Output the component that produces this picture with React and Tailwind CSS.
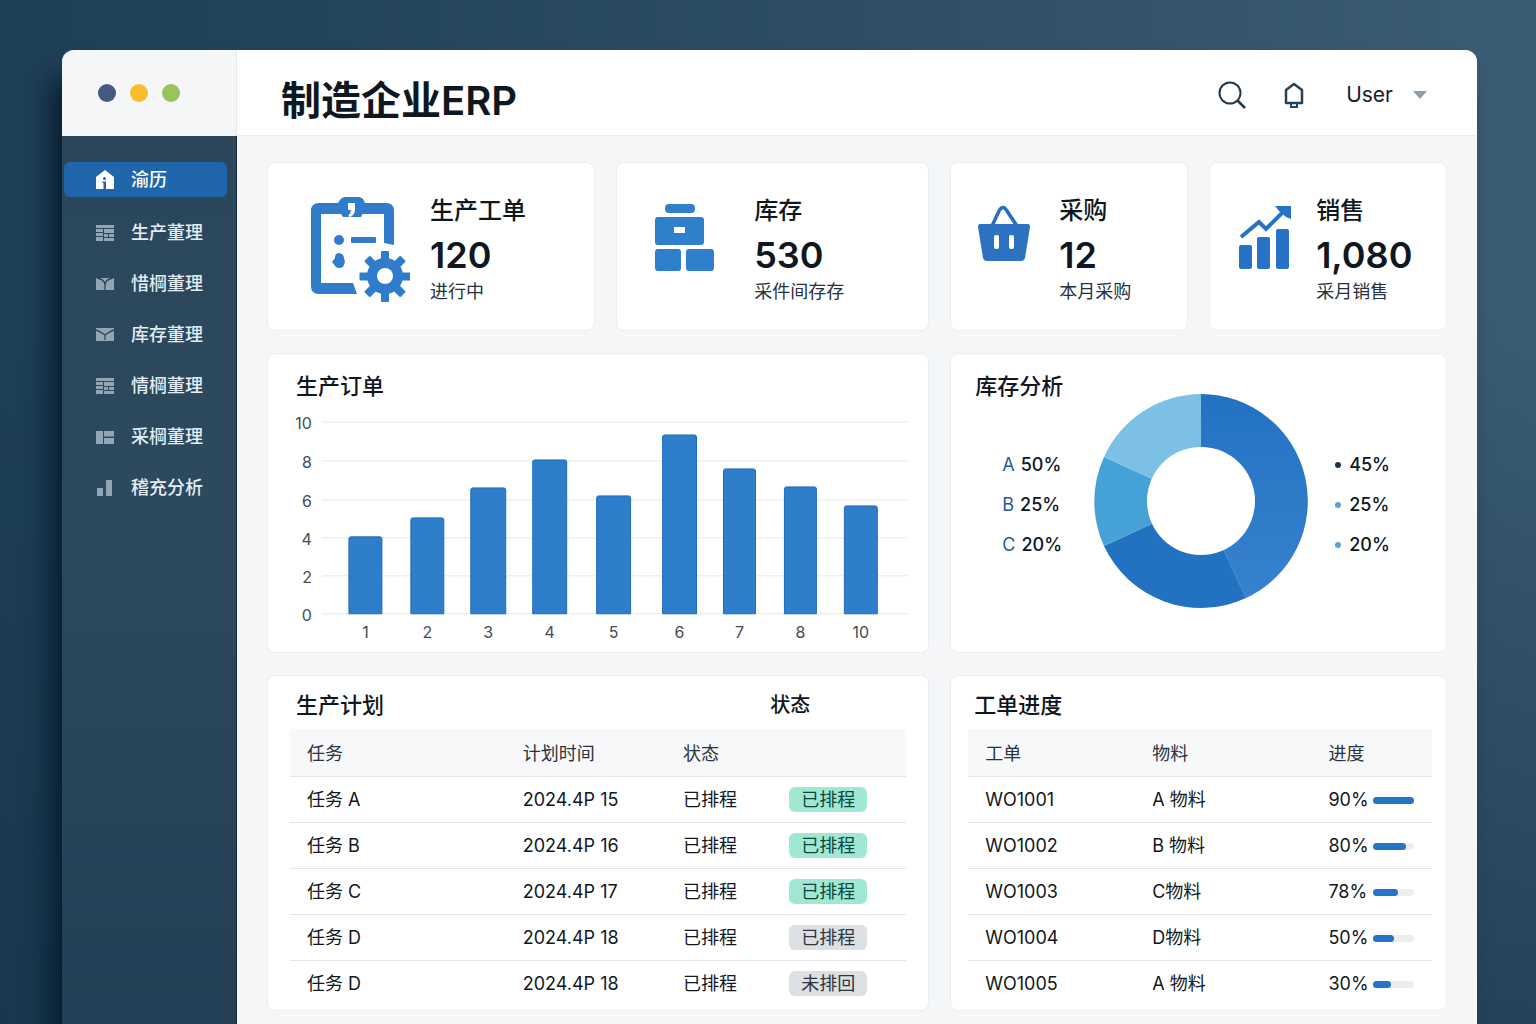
import clsx from 'clsx'

const navItems = [
  { id: 'home', label: '渝历', icon: 'home', active: true },
  { id: 'production', label: '生产董理', icon: 'rows' },
  { id: 'material', label: '惜棡董理', icon: 'fork' },
  { id: 'stock', label: '库存董理', icon: 'mail' },
  { id: 'sales', label: '情棡董理', icon: 'rows' },
  { id: 'purchase', label: '采棡董理', icon: 'panes' },
  { id: 'analysis', label: '稽充分析', icon: 'bars' },
]

const bars = [
  { label: '1', x: 81, w: 33, top: 127 },
  { label: '2', x: 143, w: 33, top: 108 },
  { label: '3', x: 203, w: 35, top: 78 },
  { label: '4', x: 265, w: 34, top: 50 },
  { label: '5', x: 329, w: 34, top: 86 },
  { label: '6', x: 395, w: 34, top: 25 },
  { label: '7', x: 456, w: 32, top: 59 },
  { label: '8', x: 517, w: 32, top: 77 },
  { label: '10', x: 577, w: 33, top: 96 },
]

const gridLines = [
  { label: '10', y: 12 },
  { label: '8', y: 51 },
  { label: '6', y: 90 },
  { label: '4', y: 128 },
  { label: '2', y: 166 },
  { label: '0', y: 204 },
]

const plans = [
  { id: 1, task: '任务 A', date: '2024.4P 15', status: '已排程', badge: '已排程', done: true },
  { id: 2, task: '任务 B', date: '2024.4P 16', status: '已排程', badge: '已排程', done: true },
  { id: 3, task: '任务 C', date: '2024.4P 17', status: '已排程', badge: '已排程', done: true },
  { id: 4, task: '任务 D', date: '2024.4P 18', status: '已排程', badge: '已排程', done: false },
  { id: 5, task: '任务 D', date: '2024.4P 18', status: '已排程', badge: '未排回', done: false },
]

const orders = [
  { id: 'WO1001', material: 'A 物料', percent: '90%', fill: 100 },
  { id: 'WO1002', material: 'B 物料', percent: '80%', fill: 80 },
  { id: 'WO1003', material: 'C物料', percent: '78%', fill: 60 },
  { id: 'WO1004', material: 'D物料', percent: '50%', fill: 50 },
  { id: 'WO1005', material: 'A 物料', percent: '30%', fill: 44 },
]

function NavIcon({ name }) {
  if (name === 'home') {
    return (
      <svg viewBox="0 0 20 20" className="size-5 shrink-0" aria-hidden="true">
        <path d="M10 0 19 7V19H1V7z" fill="#fff" />
        <circle cx="9.500" cy="8.500" r="1.500" fill="#1f66ab" />
        <path d="M7.500 11.500H11V19H8.500V13H7.500z" fill="#1f66ab" />
      </svg>
    )
  }
  return (
    <svg viewBox="0 0 20 20" className="size-5 shrink-0" fill="#93a4b4" aria-hidden="true">
      {name === 'rows' && (
        <path d="M1 2h18v3H1zM1 6h7v3H1zM9 6h10v4H9zM1 10h7v3H1zM9 11h4v3H9zM14 11h5v3h-5zM1 14h7v4H1zM9 15h10v3H9z" />
      )}
      {name === 'fork' && (
        <>
          <path d="M1 4h18v12H1z" />
          <path d="M2 4c5 1 8 3 8 7M18 4c-5 1-8 3-8 7v5" fill="none" stroke="#2b465b" strokeWidth="1.300" />
        </>
      )}
      {name === 'mail' && (
        <>
          <path d="M1 3h18v13H1z" />
          <path d="M1 5c4 1 7 4 9 5 2-1 5-4 9-5M10 10v5" fill="none" stroke="#2b465b" strokeWidth="1.300" />
        </>
      )}
      {name === 'panes' && <path d="M1 4h7v13H1zM9 4h10v5.500H9zM9 11h10v6H9z" />}
      {name === 'bars' && <path d="M2 10h6v8H2zM11 2h6v16h-6z" />}
    </svg>
  )
}

function ClipboardIcon() {
  return (
    <svg viewBox="0 0 100 106" className="h-[106px] w-[100px] shrink-0" fill="#2f7cca" aria-hidden="true">
      <path d="M84 48 74 46V17H11V86H43L47 97H9Q1 97 1 89V14Q1 6 9 6H28Q31 0 35 0H49Q53 0 55 6H76Q84 6 84 14z" />
      <path d="M28 12H55L51 20H33z" />
      <path d="M38 6H45V12Q45 18 40 20L38 19Q41 16 41 13H38z" fill="#fff" />
      <circle cx="29" cy="43" r="5" />
      <rect x="41" y="40" width="25" height="6" rx="1" />
      <path d="M29 56q5 1 5 5l1 4-2 5q-4 2-7 0l-4-5 3-4q0-5 4-5z" />
      <circle cx="75" cy="79" r="18" />
      <rect x="71" y="54" width="8" height="51" rx="1" />
      <rect x="71" y="54" width="8" height="51" rx="1" transform="rotate(45 75 79.500)" />
      <rect x="71" y="54" width="8" height="51" rx="1" transform="rotate(90 75 79.500)" />
      <rect x="71" y="54" width="8" height="51" rx="1" transform="rotate(135 75 79.500)" />
      <circle cx="75" cy="79" r="8" fill="#fff" />
    </svg>
  )
}

function BoxesIcon() {
  return (
    <svg viewBox="0 0 60 68" className="h-[68px] w-[60px] shrink-0" fill="#2f7fcd" aria-hidden="true">
      <rect x="10" y="0" width="30" height="9" rx="4" />
      <rect x="0" y="13" width="49" height="28" rx="3" />
      <rect x="19" y="23" width="11" height="6" fill="#fff" />
      <rect x="0" y="45" width="26" height="22" rx="3" />
      <rect x="31" y="45" width="28" height="22" rx="3" />
    </svg>
  )
}

function BasketIcon() {
  return (
    <svg viewBox="0 0 54 58" className="h-[58px] w-[54px] shrink-0" aria-hidden="true">
      <path d="M15 22 22 7Q26 0 30 7L40 22" fill="none" stroke="#2a6dbc" strokeWidth="3.500" />
      <path d="M3 20H51Q53 20 53 23L48 54Q47 57 45 57H9Q7 57 6 54L1 23Q1 20 3 20z" fill="#2c72c1" />
      <rect x="17" y="31" width="5" height="14" rx="2" fill="#fff" />
      <rect x="32" y="31" width="5" height="14" rx="2" fill="#fff" />
    </svg>
  )
}

function GrowthIcon() {
  return (
    <svg viewBox="0 0 54 66" className="h-[66px] w-[54px] shrink-0" fill="#2673c6" aria-hidden="true">
      <rect x="1" y="40" width="13" height="24" rx="2" />
      <rect x="19" y="32" width="13" height="32" rx="2" />
      <rect x="38" y="24" width="13" height="40" rx="2" />
      <path d="M3 32 21 17 28 24 45 7" fill="none" stroke="#2673c6" strokeWidth="4" />
      <path d="M37 1H53V14L48 12 41 6z" />
    </svg>
  )
}

function Card({ className, children }) {
  return (
    <section className={clsx('rounded-lg border border-[#ebeef1] bg-white', className)}>{children}</section>
  )
}

function StatCard({ icon, title, value, note, className }) {
  return (
    <Card className={clsx('flex h-[169px]', className)}>
      {icon}
      <div className="pt-[33px] whitespace-nowrap">
        <h2 className="text-2xl leading-[30px] font-medium">{title}</h2>
        <p className="mt-2 text-4xl leading-[42px] font-semibold">{value}</p>
        <p className="mt-1 text-lg leading-6 text-[#26323e]">{note}</p>
      </div>
    </Card>
  )
}

function BarChart() {
  return (
    <svg viewBox="0 0 661 236" className="block w-full" role="img" aria-label="生产订单">
      {gridLines.map((line) => (
        <g key={line.label}>
          <path d={`M54 ${line.y}H640`} stroke="#e4e7ea" />
          <text x="44" y={line.y + 7} textAnchor="end" fontSize="16" fill="#444c55">
            {line.label}
          </text>
        </g>
      ))}
      {bars.map((bar) => (
        <g key={bar.label}>
          <path
            d={`M${bar.x} 204V${bar.top + 2}q0-2 2-2h${bar.w - 4}q2 0 2 2V204z`}
            fill="#2f7ecc"
            stroke="#1c6cbc"
          />
          <text x={bar.x + bar.w / 2} y="228" textAnchor="middle" fontSize="16" fill="#444c55">
            {bar.label}
          </text>
        </g>
      ))}
    </svg>
  )
}

function DonutChart() {
  return (
    <svg viewBox="0 0 214 214" className="w-[214px] shrink-0" role="img" aria-label="库存分析">
      <defs>
        <linearGradient id="slice-a" x1="0" y1="0" x2="0" y2="1">
          <stop offset="0" stopColor="#2372c2" />
          <stop offset="1" stopColor="#3782cf" />
        </linearGradient>
      </defs>
      <path d="M107 107V0A107 107 0 0 1 152 204z" fill="url(#slice-a)" />
      <path d="M107 107 152 204A107 107 0 0 1 10 152z" fill="#2372c2" />
      <path d="M107 107 10 152A107 107 0 0 1 10 63z" fill="#46a2d6" />
      <path d="M107 107 10 63A107 107 0 0 1 107 0z" fill="#7dc0e5" />
      <path d="M107 107 152 204" stroke="#4389d0" />
      <circle cx="107" cy="107" r="54" fill="#fff" />
    </svg>
  )
}

function PlanTable() {
  return (
    <table className="w-full table-fixed text-left text-lg whitespace-nowrap">
      <colgroup>
        <col className="w-[35%]" />
        <col className="w-[26%]" />
        <col className="w-[20%]" />
        <col className="w-[19%]" />
      </colgroup>
      <thead className="bg-[#f7f8fa] text-[#2a333d]">
        <tr className="h-[47px] border-b border-[#e3e6e9]">
          <th className="pt-1 pl-[17px] font-normal">任务</th>
          <th className="pt-1 pl-[17px] font-normal">计划时间</th>
          <th className="pt-1 pl-[17px] font-normal">状态</th>
          <td />
        </tr>
      </thead>
      <tbody>
        {plans.map((plan) => (
          <tr key={plan.id} className="h-[46px] border-b border-[#e3e6e9] last:border-0">
            <td className="pt-[2px] pl-[17px]">{plan.task}</td>
            <td className="pt-[2px] pl-[17px]">{plan.date}</td>
            <td className="pt-[2px] pl-[17px]">{plan.status}</td>
            <td className="pt-[2px]">
              <span
                className={clsx(
                  'inline-block w-[78px] rounded-md text-center leading-[25px]',
                  plan.done ? 'bg-[#a0e8d4] text-[#0c463c]' : 'bg-[#dcdfe4] text-[#2c3540]',
                )}
              >
                {plan.badge}
              </span>
            </td>
          </tr>
        ))}
      </tbody>
    </table>
  )
}

function OrderTable() {
  return (
    <table className="w-full table-fixed text-left text-lg whitespace-nowrap">
      <colgroup>
        <col className="w-[36%]" />
        <col className="w-[38%]" />
        <col className="w-[26%]" />
      </colgroup>
      <thead className="bg-[#f7f8fa] text-[#2a333d]">
        <tr className="h-[47px] border-b border-[#e3e6e9]">
          <th className="pt-1 pl-[17px] font-normal">工单</th>
          <th className="pt-1 pl-[17px] font-normal">物料</th>
          <th className="pt-1 pl-[17px] font-normal">进度</th>
        </tr>
      </thead>
      <tbody>
        {orders.map((order) => (
          <tr key={order.id} className="h-[46px] border-b border-[#e3e6e9] last:border-0">
            <td className="pt-[2px] pl-[17px]">{order.id}</td>
            <td className="pt-[2px] pl-[17px]">{order.material}</td>
            <td className="pt-[2px] pl-[17px]">
              <div className="flex items-center">
                <span className="w-[45px]">{order.percent}</span>
                <div className="h-[7px] w-[41px] rounded-full bg-[#eceef0]">
                  <div className="h-full rounded-full bg-[#2474c8]" style={{ width: `${order.fill}%` }} />
                </div>
              </div>
            </td>
          </tr>
        ))}
      </tbody>
    </table>
  )
}

function Sidebar() {
  return (
    <aside className="flex w-[175px] shrink-0 flex-col rounded-tl-xl bg-linear-to-b from-[#2b465a] via-[#2c495e] to-[#233f55]">
      <div className="flex h-[86px] items-center gap-[14px] rounded-tl-xl border-r border-[#e6e9ec] bg-[#f5f6f8] pl-9">
        <span className="size-[18px] rounded-full bg-[#455a80]" />
        <span className="size-[18px] rounded-full bg-[#fbbc2c]" />
        <span className="size-[18px] rounded-full bg-[#99c45c]" />
      </div>
      <nav className="flex flex-1 flex-col gap-4 border-r border-[#13293b] pt-[26px] pr-[9px] pl-[2px]">
        {navItems.map((item) => (
          <a
            key={item.id}
            href={`#${item.id}`}
            className={clsx(
              'flex h-[35px] items-center gap-4 rounded-md pl-[31px] text-lg font-medium whitespace-nowrap',
              item.active ? 'bg-[#1f66ab] text-white' : 'pt-1 text-[#e3edf5]',
            )}
          >
            <NavIcon name={item.icon} />
            {item.label}
          </a>
        ))}
      </nav>
    </aside>
  )
}

function Header() {
  return (
    <header className="flex h-[86px] items-center rounded-tr-xl border-b border-[#eceff1] bg-white pt-1 pr-[50px] pl-11">
      <h1 className="pt-3 text-[40px] leading-none font-semibold whitespace-nowrap">制造企业ERP</h1>
      <button type="button" aria-label="搜索" className="ml-auto">
        <svg viewBox="0 0 28 28" className="size-7" fill="none" stroke="#26394a" strokeWidth="2">
          <circle cx="12" cy="12" r="10.500" />
          <path d="m19 19 8 8" strokeWidth="2.500" />
        </svg>
      </button>
      <button type="button" aria-label="通知" className="ml-9">
        <svg viewBox="0 0 24 26" className="h-[26px] w-6" fill="none" stroke="#26435a" strokeWidth="2.500">
          <path d="M4 21V8L12 2 20 8V21z" strokeLinejoin="round" />
          <path d="M9 22V25H15V22" strokeWidth="2" />
        </svg>
      </button>
      <button type="button" className="ml-10 flex items-center gap-5 text-[21px] leading-7 text-[#17202a]">
        User
        <svg viewBox="0 0 14 8" className="h-2 w-[14px]" fill="#8e9daa" aria-hidden="true">
          <path d="M0 0H14L7 8z" />
        </svg>
      </button>
    </header>
  )
}

function App() {
  return (
    <div className="min-h-screen bg-linear-to-r from-[#1d3f57] via-[#2b4c62] to-[#3b5c75] font-['Inter','Noto_Sans_CJK_SC',sans-serif] text-[#0f1720]">
      <div className="flex min-h-screen bg-linear-to-b from-transparent from-30% to-[#15334a]/60 pt-[50px] pr-[59px] pl-[62px]">
        <div className="flex min-w-0 flex-1 rounded-t-xl bg-[#f4f6f8] shadow-[-14px_24px_28px_-4px_rgba(2,20,34,0.85)]">
          <Sidebar />
          <div className="min-w-0 flex-1">
            <Header />
            <main className="grid grid-cols-[minmax(0,327fr)_minmax(0,312fr)_minmax(0,237fr)_minmax(0,237fr)] gap-x-[21px] gap-y-[22px] pt-[26px] pr-[30px] pb-[13px] pl-[30px]">
              <StatCard
                className="gap-[20px] pl-[42px] [&>svg]:mt-[34px]"
                icon={<ClipboardIcon />}
                title="生产工单"
                value="120"
                note="进行中"
              />
              <StatCard
                className="gap-[39px] pl-[38px] [&>svg]:mt-[41px]"
                icon={<BoxesIcon />}
                title="库存"
                value="530"
                note="采件间存存"
              />
              <StatCard
                className="gap-[28px] pl-[26px] [&>svg]:mt-[41px]"
                icon={<BasketIcon />}
                title="采购"
                value="12"
                note="本月采购"
              />
              <StatCard
                className="gap-[24px] pl-[28px] [&>svg]:mt-[42px]"
                icon={<GrowthIcon />}
                title="销售"
                value="1,080"
                note="采月销售"
              />

              <Card className="col-span-2 min-h-[300px]">
                <h2 className="pt-[16px] pl-7 text-[22px] leading-8 font-medium">生产订单</h2>
                <div className="mt-2">
                  <BarChart />
                </div>
              </Card>
              <Card className="col-span-2 min-h-[300px]">
                <h2 className="h-10 pt-[16px] pl-6 text-[22px] leading-8 font-medium">库存分析</h2>
                <div className="flex items-center pr-[56px] pl-[51px]">
                  <ul className="pt-2 text-lg leading-10 font-medium">
                    <li><span className="mr-[6px] font-normal text-[#1f5a9e]">A</span>50%</li>
                    <li><span className="mr-[6px] font-normal text-[#1f5a9e]">B</span>25%</li>
                    <li><span className="mr-[6px] font-normal text-[#1f5a9e]">C</span>20%</li>
                  </ul>
                  <div className="flex flex-1 justify-center pl-1">
                    <DonutChart />
                  </div>
                  <ul className="pt-2 text-lg leading-10 font-medium">
                    <li className="flex items-center gap-2"><i className="size-[6px] rounded-full bg-[#1b3350]" />45%</li>
                    <li className="flex items-center gap-2"><i className="size-[6px] rounded-full bg-[#58a3d8]" />25%</li>
                    <li className="flex items-center gap-2"><i className="size-[6px] rounded-full bg-[#58a3d8]" />20%</li>
                  </ul>
                </div>
              </Card>

              <Card className="col-span-2 px-[22px] pb-1">
                <div className="flex h-[53px] items-center justify-between pt-1 pr-[96px] pl-[6px] font-medium">
                  <h2 className="text-[22px] leading-8">生产计划</h2>
                  <h3 className="text-xl leading-8">状态</h3>
                </div>
                <PlanTable />
              </Card>
              <Card className="col-span-2 pr-[14px] pb-1 pl-[17px]">
                <div className="flex h-[53px] items-center pt-1 pl-[6px]">
                  <h2 className="text-[22px] leading-8 font-medium">工单进度</h2>
                </div>
                <OrderTable />
              </Card>
            </main>
          </div>
        </div>
      </div>
    </div>
  )
}

export default App
